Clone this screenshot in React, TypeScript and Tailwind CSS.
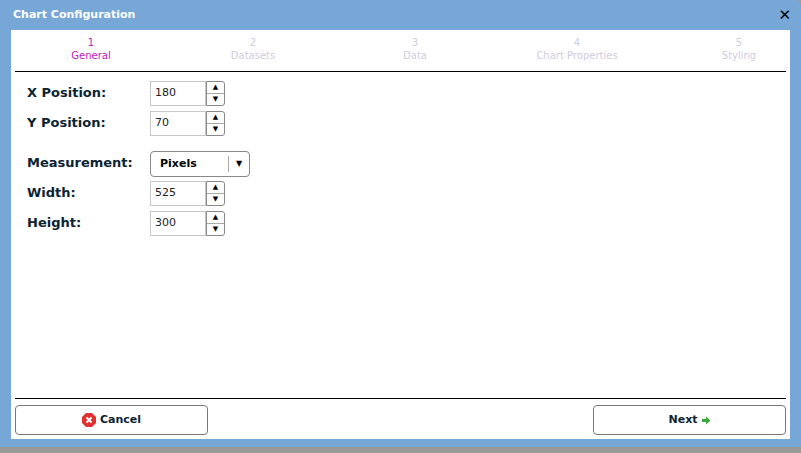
import React from "react";

const f = { fontFamily: '"DejaVu Sans", Verdana, sans-serif' };

function Spin({ v }: { v: string }) {
  return (
    <div className="flex h-[25px]">
      <div className="w-[56px] border border-[#c8c8c8] bg-white text-[11px] text-[#222] pl-[4px] flex items-center">{v}</div>
      <div className="w-[19px] flex flex-col border border-[#888] rounded-r-[3px] bg-white">
        <div className="flex-1 flex items-center justify-center border-b border-[#aaa] text-[7px] text-black">▲</div>
        <div className="flex-1 flex items-center justify-center text-[7px] text-black">▼</div>
      </div>
    </div>
  );
}

function Row({ label, children, mt = "" }: { label: string; children: React.ReactNode; mt?: string }) {
  return (
    <div className={`flex items-start ${mt}`}>
      <div className="w-[123px] text-[13px] font-bold text-[#0b2433] pt-[2px]">{label}</div>
      {children}
    </div>
  );
}

export default function App() {
  const steps = ["General", "Datasets", "Data", "Chart Properties", "Styling"];
  return (
    <div style={f} className="w-[801px] h-[453px] bg-[#9a9a9a] overflow-hidden">
      <div className="w-[801px] h-[447px] bg-[#76a7d6] rounded-tr-[6px] flex flex-col">
        <div className="h-[30px] flex items-center justify-between pl-[13px] pr-[10px]">
          <span className="text-white font-bold text-[11px]">Chart Configuration</span>
          <span className="text-black font-bold text-[15px]">✕</span>
        </div>
        <div className="mx-[11px] bg-white flex-1 mb-[8px] flex flex-col overflow-hidden">
          <div className="flex -ml-[1px] h-[34px] pt-[6px]">
            {steps.map((s, i) => (
              <div key={s} className={`w-[162px] shrink-0 text-center text-[10px] leading-[13px] ${i === 0 ? "text-[#c020c0]" : "text-[#d0cce0]"}`}>
                <div>{i + 1}</div>
                <div>{s}</div>
              </div>
            ))}
          </div>
          <div className="mx-[4px] h-[1px] bg-black mt-[7px]" />
          <div className="pl-[16px] pt-[9px] flex flex-col flex-1">
            <Row label="X Position:"><Spin v="180" /></Row>
            <Row label="Y Position:" mt="mt-[5px]"><Spin v="70" /></Row>
            <Row label="Measurement:" mt="mt-[15px]">
              <div className="w-[100px] h-[26px] border border-[#888] rounded-[4px] flex items-center">
                <span className="flex-1 pl-[9px] text-[11px] font-bold text-black">Pixels</span>
                <span className="h-[16px] w-[1px] bg-[#aaa]" />
                <span className="w-[20px] text-center text-[8px] text-black">▼</span>
              </div>
            </Row>
            <Row label="Width:" mt="mt-[4px]"><Spin v="525" /></Row>
            <Row label="Height:" mt="mt-[5px]"><Spin v="300" /></Row>
          </div>
          <div className="mx-[4px] h-[1px] bg-black" />
          <div className="flex justify-between px-[4px] pt-[6px] pb-[4px]">
            <button className="w-[193px] h-[30px] border border-[#777] rounded-[4px] bg-white flex items-center justify-center gap-[4px] text-[11px] font-bold text-[#0b2433]">
              <svg width="14" height="14" viewBox="0 0 14 14">
                <polygon points="4,0 10,0 14,4 14,10 10,14 4,14 0,10 0,4" fill="#e23030" />
                <path d="M4.5 4.5 L9.5 9.5 M9.5 4.5 L4.5 9.5" stroke="white" strokeWidth="2" />
              </svg>
              Cancel
            </button>
            <button className="w-[193px] h-[30px] border border-[#777] rounded-[4px] bg-white flex items-center justify-center gap-[4px] text-[11px] font-bold text-[#0b2433]">
              Next
              <svg width="9" height="9" viewBox="0 0 9 9"><path d="M0 3 H4 V0.5 L8.5 4.5 L4 8.5 V6 H0 Z" fill="#3aa83a" /></svg>
            </button>
          </div>
        </div>
      </div>
    </div>
  );
}
